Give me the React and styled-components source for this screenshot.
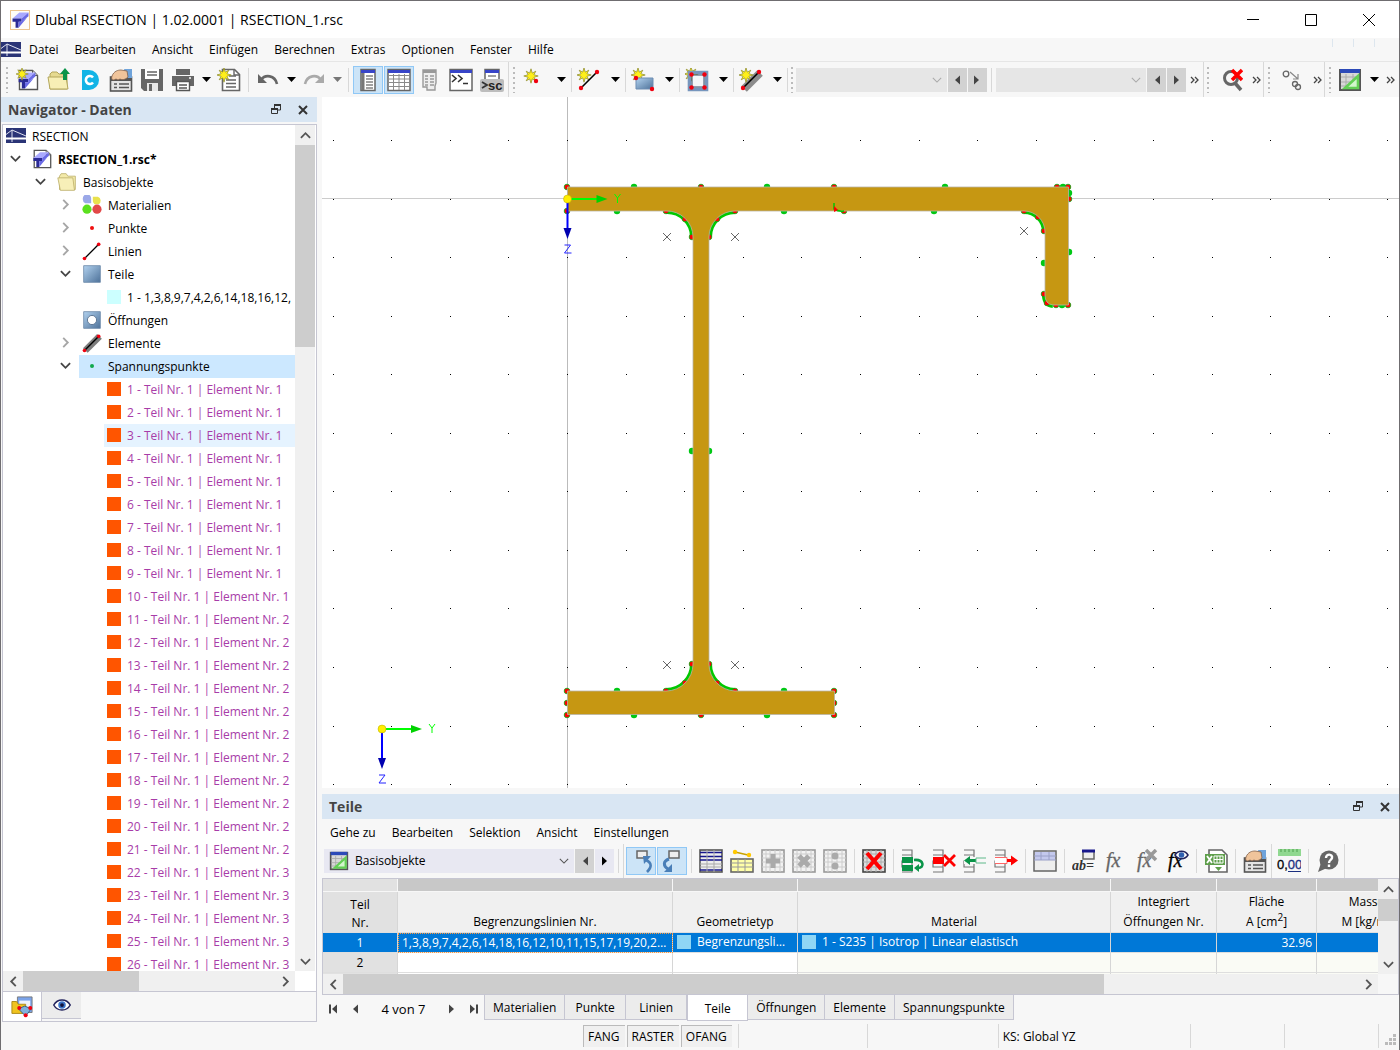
import React, { useState } from 'react'
import styled, { createGlobalStyle, css } from 'styled-components'

const GlobalStyle = createGlobalStyle`
  * {
    box-sizing: border-box;
  }
  body {
    margin: 0;
    background: #f7f7f7;
    color: #000;
    font-family: 'Open Sans', 'Noto Sans', sans-serif;
    font-size: 12px;
    line-height: 16px;
  }
  button, select {
    font: inherit;
    color: inherit;
    margin: 0;
    padding: 0;
    border: none;
    border-radius: 0;
    background: none;
  }
  svg {
    display: block;
    flex: none;
  }
`

/* ---------- icons ---------- */

const Icon = ({ size = 24, children }) => (
  <svg width={size} height={size} viewBox='0 0 24 24' fill='none' aria-hidden='true'>
    {children}
  </svg>
)

const STAR = 'M0-9 1.6-3.600 6-6 3.6-1.6 9 0 3.6 1.6 6 6 1.6 3.600 0 9-1.6 3.600-6 6-3.6 1.6-9 0-3.6-1.6-6-6-1.6-3.600z'

const Star = ({ x, y, s = 0.8 }) => (
  <path d={STAR} transform={`translate(${x} ${y}) scale(${s})`} fill='#ffef1a' stroke='#8c8a30' strokeWidth='.9' />
)

const Dot = ({ x, y, fill = '#f00010' }) => <circle cx={x} cy={y} r='2.2' fill={fill} />

const Beam = () => (
  <>
    <path d='M2 10 11 2h12L14 10z' fill='#a9a9ff' />
    <path d='M2 10h12v4h-4v8H6v-8H2z' fill='#2b2b96' />
    <path d='M14 10 23 2v5l-9 7zM10 14h4l7-5-11 13z' fill='#6a6ae6' />
  </>
)

const BeamPage = () => (
  <>
    <path d='M3.5 2.5h13l5 5v14h-18z' fill='#fff' stroke='#555' strokeWidth='1.4' />
    <path d='M16.5 2.5v5h5' stroke='#555' fill='#ddd' />
    <g transform='translate(1 3) scale(.8)'>
      <Beam />
    </g>
  </>
)

const LogoIcon = () => (
  <svg width='20' height='20' viewBox='0 0 20 20' aria-hidden='true'>
    <rect x='.5' y='.5' width='19' height='19' fill='#fffdf8' stroke='#ecc590' />
    <g transform='translate(1 1) scale(.76)'>
      <Beam />
    </g>
  </svg>
)

const BridgeIcon = () => (
  <svg width='20' height='16' viewBox='0 0 20 16' aria-hidden='true'>
    <path d='M0 0h20v15H0z' fill='#2a3476' />
    <path d='M0 6.500 6 2l14 6M6 2v12' fill='none' stroke='#dfe2f0' />
    <path d='M0 10.500h20' stroke='#fff' strokeWidth='2' />
  </svg>
)

const NewIcon = () => (
  <Icon>
    <BeamPage />
    <Star x={6} y={6} s={0.7} />
  </Icon>
)

const FolderShape = () => (
  <>
    <path d='M3 21V6l2-2h5l2 2h8v15z' fill='#e6da90' stroke='#b3a65b' />
    <path d='M1 9h18l2 12H3z' fill='#f7efb5' stroke='#b3a65b' />
  </>
)

const OpenIcon = () => (
  <Icon>
    <FolderShape />
    <path d='M18 0l5 6h-3v6h-4V6h-3z' fill='#0a9448' />
  </Icon>
)

const FolderIcon = () => (
  <Icon size={20}>
    <path d='M3 21V5l2-3h6l2 3h9v16z' fill='#f3eaa9' stroke='#bdb06b' />
    <path d='M1 7h18l2 15H4z' fill='#f7efb8' stroke='#bdb06b' />
  </Icon>
)

const CenterIcon = () => (
  <Icon>
    <path d='M4 2h7a10 10 0 0 1 0 20H4z' fill='#12b4e6' />
    <path d='M15 9.500a4 4 0 1 0 0 5' stroke='#fff' strokeWidth='2.600' />
  </Icon>
)

const HandIcon = () => (
  <Icon>
    <rect x='1.5' y='9' width='21' height='14' fill='#e4e4e4' stroke='#555' strokeWidth='1.6' />
    <path d='M1 9h22v4H1z' fill='#555' />
    <path d='M15 1h8v9h-6z' fill='#6fa3da' />
    <path d='M3 8c2-5 6-6 9-6l6 1 1 6c-3 3-6 3-8 2l-2 1-2-1-2 1c-2 0-3-1-2-4z' fill='#f0c49b' stroke='#80604a' strokeWidth='.8' />
    <path d='M5 16h3M5 19.500h3M10 16h10M10 19.500h10' stroke='#555' strokeWidth='1.4' />
  </Icon>
)

const SaveIcon = () => (
  <Icon>
    <path d='M1 1h22v22H4l-3-3z' fill='#666' />
    <path d='M5 1h14v10H5z' fill='#fff' />
    <path d='M7 4h10M7 7h10' stroke='#666' strokeWidth='1.6' />
    <path d='M7 15h11v8H7z' fill='#e8e8e8' />
    <path d='M9 16h3v7H9z' fill='#666' />
  </Icon>
)

const PrintIcon = () => (
  <Icon>
    <path d='M5 1h14v6H5z' fill='#666' />
    <path d='M1 8h22v10H1z' fill='#666' />
    <path d='M5.500 13.500h13v9h-13z' fill='#fff' stroke='#555' strokeWidth='1.4' />
    <path d='M8 17h8M8 20h8' stroke='#555' strokeWidth='1.3' />
    <path d='M18 10h2' stroke='#fff' strokeWidth='1.5' />
  </Icon>
)

const ReportIcon = () => (
  <Icon>
    <path d='M5.500 1.500h12l5 5v16h-17z' fill='#fff' stroke='#666' strokeWidth='1.6' />
    <path d='M17 2v5h5' stroke='#666' strokeWidth='1.4' />
    <path d='M12 8h7M9 12h10M9 15.500h10M9 19h10' stroke='#666' strokeWidth='1.5' />
    <Star x={7} y={7} />
  </Icon>
)

const UndoIcon = ({ flip, color = '#666' }) => (
  <Icon>
    <g transform={flip ? 'translate(24 0) scale(-1 1)' : undefined}>
      <path d='M2 6v9h9z' fill={color} />
      <path d='M5 12c4-6 14-5 16 4' stroke={color} strokeWidth='2.6' />
    </g>
  </Icon>
)

const WinShape = ({ x = 4, w = 16, bar = '#3845c8', children }) => (
  <>
    <rect x={x} y='1.500' width={w} height='21' fill='#fff' stroke='#666' strokeWidth='1.5' />
    <path d={`M${x} 3.500h${w}`} stroke={bar} strokeWidth='3' />
    {children}
  </>
)

const NavIcon = () => (
  <Icon>
    <WinShape x={5} w={14}>
      <path d='M7 5v17' stroke='#777' strokeWidth='3' />
      <path d='M10 8h7M10 11h7M10 14h7M10 17h7M10 20h7' stroke='#444' strokeWidth='1.2' />
    </WinShape>
  </Icon>
)

const TablesIcon = () => (
  <Icon>
    <WinShape x={1} w={22}>
      <path d='M1 7.500h22M1 11h22M1 14.500h22M1 18.500h22M6.500 6v16M12 6v16M17.500 6v16' stroke='#8a8a8a' />
    </WinShape>
  </Icon>
)

const PanelIcon = () => (
  <Icon>
    <path d='M5 2h13v13l-1 3v4H9v-3H5z' fill='#eee' stroke='#999' strokeWidth='1.4' />
    <path d='M5 3.500h13' stroke='#999' strokeWidth='3' />
    <path d='M7 8h3M12 8h4M7 11h3M12 11h4M7 14h3M12 14h4M7 17h3M12 17h4' stroke='#999' strokeWidth='1.3' />
  </Icon>
)

const ConsoleIcon = () => (
  <Icon>
    <WinShape x={1} w={22}>
      <path d='M3 7l4 3.500L3 14M9 7l4 3.500L9 14M14 15.500h5' stroke='#333' strokeWidth='1.6' />
    </WinShape>
  </Icon>
)

const ScriptIcon = () => (
  <Icon>
    <WinShape x={5} w={14}>
      <path d='M8 8h8' stroke='#444' />
    </WinShape>
    <rect x='0' y='11' width='24' height='13' rx='2' fill='#bdbdbd' />
    <path d='M2 14l5 3-5 3' stroke='#333' strokeWidth='1.8' />
    <text x='8' y='22' fontSize='13' fontWeight='700' fontFamily='Liberation Sans' fill='#222'>
      sc
    </text>
  </Icon>
)

const NewPointIcon = () => (
  <Icon>
    <Star x={8} y={8} />
    <Dot x={13} y={13} />
  </Icon>
)

const NewLineIcon = () => (
  <Icon>
    <Star x={7} y={7} />
    <path d='M4 20 20 4' stroke='#000' strokeWidth='1.6' />
    <Dot x={4} y={20} />
    <Dot x={20} y={4} />
  </Icon>
)

const gradientDefs = (
  <defs>
    <linearGradient id='steel' x1='0' y1='0' x2='1' y2='1'>
      <stop offset='0' stopColor='#b2d2ef' />
      <stop offset='1' stopColor='#4d7199' />
    </linearGradient>
  </defs>
)

const NewPartIcon = () => (
  <Icon>
    <Star x={7} y={7} />
    <path d='M5 10h17v11H5z' fill='url(#steel)' stroke='#6d8db3' />
    <Dot x={5} y={10} />
    <Dot x={21} y={21} />
  </Icon>
)

const NewOpeningIcon = () => (
  <Icon>
    <Star x={6} y={6} />
    <path d='M4.500 4.500h17v17h-17z' stroke='#7796bd' strokeWidth='3.600' />
    <path d='M7 7h12v12H7z' fill='#f4f6f9' stroke='#344b68' />
    <Dot x={6.5} y={6.5} />
    <Dot x={19.5} y={6.5} />
    <Dot x={6.5} y={19.5} />
    <Dot x={19.5} y={19.5} />
  </Icon>
)

const NewElementIcon = () => (
  <Icon>
    <path d='M5 21 21 5' stroke='#8c8c8c' strokeWidth='8' />
    <Star x={7} y={7} />
    <path d='M4 20 20 4' stroke='#000' strokeWidth='1.6' />
    <Dot x={4} y={20} />
    <Dot x={20} y={4} />
  </Icon>
)

const ZoomOffIcon = () => (
  <Icon>
    <g transform='translate(3 0)'>
      <circle cx='9' cy='10' r='6.500' stroke='#666' strokeWidth='3' />
      <path d='m13 15 6 7' stroke='#666' strokeWidth='3.500' />
      <path d='m10 2 10 10M20 2 10 12' stroke='#f00' strokeWidth='3.500' />
    </g>
  </Icon>
)

const GuideIcon = () => (
  <Icon>
    <circle cx='6' cy='6' r='2.800' stroke='#666' strokeWidth='1.3' />
    <circle cx='15' cy='16' r='2.500' stroke='#666' strokeWidth='1.3' />
    <circle cx='18' cy='19' r='2.500' stroke='#666' strokeWidth='1.3' />
    <path d='m10 4 8 7m0-5v5h-5' stroke='#888' strokeWidth='1.2' />
  </Icon>
)

const SheetIcon = ({ size }) => (
  <Icon size={size}>
    <rect x='2' y='2' width='20' height='20' fill='#d8d8d8' stroke='#555' strokeWidth='2' />
    <path d='M2 3h20' stroke='#2c49b8' strokeWidth='4' />
    <path d='M3 9h18M3 14h18M3 18h18M8 6v15M15 6v15' stroke='#aaa' />
    <path d='M20 8v12H7z' fill='#d3f5cd' stroke='#63cf55' strokeWidth='2.600' />
  </Icon>
)

const MaterialIcon = () => (
  <Icon size={20}>
    <path d='M1 4a5 5 0 0 1 10 0v6H4a6 6 0 0 1-3-6z' fill='#9ba8e8' />
    <path d='M13 2h6a5 5 0 0 1 1 9h-5a5 5 0 0 1-2-5z' fill='#e9e14c' />
    <circle cx='6' cy='17' r='5.500' fill='#5be01e' />
    <circle cx='18' cy='17' r='5.500' fill='#e24848' />
  </Icon>
)

const PointIcon = ({ color }) => (
  <Icon>
    <circle cx='12' cy='12' r='2' fill={color} />
  </Icon>
)

const LineIcon = ({ thick }) => (
  <Icon size={20}>
    {thick && <path d='M4 21 21 4' stroke='#7c7c7c' strokeWidth='8' />}
    <path d='M3 21 21 3' stroke='#000' strokeWidth='1.600' />
    <Dot x={3} y={21} />
    <Dot x={20} y={4} />
  </Icon>
)

const PartIcon = ({ hole }) => (
  <Icon size={20}>
    <path d='M2 2h20v20H2z' fill='url(#steel)' stroke='#6f8cab' />
    {hole && <circle cx='12' cy='12' r='5.500' fill='#fff' stroke='#4f6a89' />}
  </Icon>
)

const DataTabIcon = () => (
  <Icon size={22}>
    <path d='M7 1h16v17H7z' fill='#7aa3ea' stroke='#777' />
    <path d='M9 5h12v11H9z' fill='#eef2fb' />
    <path d='M1 19V6h5l2 3h8v10z' fill='#f0c31e' stroke='#a98614' />
    <path d='m8 14 7-3 7 3-6 8z' fill='#7fb1dd' stroke='#33597f' />
    <Dot x={9} y={13} />
    <Dot x={21} y={13} />
    <Dot x={16} y={21} />
  </Icon>
)

const EyeIcon = () => (
  <Icon size={18}>
    <path d='M1 12c5-9 17-9 22 0-5 9-17 9-22 0z' fill='#fff' stroke='#22225c' strokeWidth='2' />
    <circle cx='12' cy='12' r='5' fill='#3c74c9' />
    <circle cx='12' cy='12' r='2.500' fill='#12123c' />
  </Icon>
)

const JumpIcon = ({ down }) => (
  <Icon>
    <rect x={down ? 9 : 8} y='2' width='10' height='7' fill='#eee' stroke='#666' strokeWidth='1.500' />
    {down ? (
      <path d='M9 10C3 12 3 17 8 20' stroke='#4a7fb8' strokeWidth='3' />
    ) : (
      <path d='M17 11c6 3 6 7 1 12' stroke='#4a7fb8' strokeWidth='2.600' />
    )}
    {down ? <path d='M12 15v8H4z' fill='#4a7fb8' /> : <path d='M14 7h8l-7 8z' fill='#4a7fb8' />}
  </Icon>
)

const GridShape = ({ y = 1, line = '#aaa', border = '#666', fill = '#fff' }) => (
  <>
    <rect x='1' y={y} width='22' height={23 - y} fill={fill} stroke={border} strokeWidth='1.600' />
    <path
      d={`M1 ${y + 4}h22M1 ${y + 8}h22M1 ${y + 12}h22M1 ${y + 17}h22M5 ${y}V23M9 ${y}V23M14 ${y}V23M19 ${y}V23`}
      stroke={line}
    />
  </>
)

const FilterTableIcon = () => (
  <Icon>
    <rect x='1' y='1' width='22' height='22' fill='#eee' stroke='#555' strokeWidth='1.600' />
    <path d='M1 3.500h22M1 7.500h22M1 11h22M1 21h22' stroke='#17178c' strokeWidth='1.600' />
    <path d='M1 15h22M1 18h22M8 1v22M15 1v22' stroke='#aaa' />
  </Icon>
)

const SelectLineIcon = () => (
  <Icon>
    <path d='M5 3 18 6' stroke='#c9a200' strokeWidth='1.500' />
    <Dot x={5} y={3} fill='#ffc800' />
    <Dot x={19} y={6} fill='#ffc800' />
    <rect x='1' y='10' width='22' height='13' fill='#ffffa8' stroke='#666' strokeWidth='1.600' />
    <path d='M1 14h22M1 18h22M8 10v13M15 10v13' stroke='#999' />
  </Icon>
)

const GreyTableIcon = ({ sign }) => (
  <Icon>
    <GridShape line='#ccc' border='#999' fill='#f2f2f2' />
    {sign === 'plus' && <path d='M12 5v14M5 12h14' stroke='#aaa' strokeWidth='5' />}
    {sign === 'times' && <path d='m7 7 10 10M17 7 7 17' stroke='#aaa' strokeWidth='5' />}
    {sign === 'divide' && (
      <>
        <circle cx='12' cy='7' r='3.500' fill='#aaa' />
        <circle cx='12' cy='17' r='3.500' fill='#aaa' />
      </>
    )}
  </Icon>
)

const DeleteTableIcon = () => (
  <Icon>
    <GridShape fill='#ddd' border='#444' />
    <path d='m5 4 14 16M19 4 5 20' stroke='#f00' strokeWidth='4' />
  </Icon>
)

const RowsIcon = ({ kind }) => (
  <Icon>
    <path d='M1 1h10v5H1M1 18h10v5H1M1 6h10v6H1v6h10v-6' stroke='#777' strokeWidth='1.200' />
    {kind === 'insert' && (
      <>
        <path d='M1 8h11v6H1zM1 16h11v6H1z' fill='#0a9448' />
        <path d='M13 11c10-1 11 8 4 8' stroke='#0a9448' strokeWidth='2.600' />
        <path d='M18 15v8l-5-4z' fill='#0a9448' />
      </>
    )}
    {kind === 'delete' && (
      <>
        <path d='M1 8h11v7H1z' fill='#f00' />
        <path d='m12 6 11 11M23 6 12 17' stroke='#f00' strokeWidth='2.800' />
      </>
    )}
    {kind === 'in' && (
      <>
        <path d='M1 8h11v7H1z' fill='#f7f7f7' />
        <path d='M1 11.500 7 7v3h6v3H7v3z' fill='#0a9448' />
        <path d='M23 9H13v5h10' stroke='#5fb98a' />
      </>
    )}
    {kind === 'out' && (
      <>
        <path d='M1 8.500h12v6H1' fill='#fff' stroke='#f66' />
        <path d='M13 10h4V6.500l7 5-7 5V13h-4z' fill='#f00' />
      </>
    )}
  </Icon>
)

const HeaderTableIcon = () => (
  <Icon>
    <rect x='1' y='2' width='22' height='20' fill='#eee' stroke='#666' strokeWidth='1.500' />
    <path d='M2 3h20v8H2z' fill='#c4c9ee' />
    <path d='M1 7h22M1 11h22M8 3v8M16 3v8' stroke='#9aa0c8' />
  </Icon>
)

const FormulaIcon = ({ assign, children, color = '#666', extra }) => (
  <Icon>
    <text
      x={assign ? 0 : 3}
      y={assign ? 21 : 18}
      fontFamily='Liberation Serif'
      fontStyle='italic'
      fontWeight={assign ? 700 : 400}
      fontSize={assign ? 14 : 20}
      fill={color}
      stroke={assign ? 'none' : color}
      strokeWidth='.3'
    >
      {children}
    </text>
    {extra}
  </Icon>
)

const MiniWindow = (
  <>
    <rect x='11' y='2' width='11' height='8' fill='#eee' stroke='#666' strokeWidth='1.500' />
    <path d='M10 2h13' stroke='#17178c' strokeWidth='3' />
  </>
)

const MiniEye = (
  <>
    <path d='M10 6c3-5 10-5 13 0-3 5-10 5-13 0z' fill='#fff' stroke='#22225c' strokeWidth='1.500' />
    <circle cx='16.500' cy='6' r='2.800' fill='#2f5fb0' />
  </>
)

const ExcelIcon = () => (
  <Icon>
    <path d='M5 1h13l5 5v17H5z' fill='#fff' stroke='#666' strokeWidth='1.600' />
    <path d='M1 5h20v11H1z' fill='#5f9f4c' />
    <path d='m3 7 5 7M8 7l-5 7' stroke='#fff' strokeWidth='1.800' />
    <path d='M10 7h9v7h-9zM10 10.500h9M13 7v7M16 7v7' stroke='#fff' />
    <path d='M11 18h7l-3.500 4z' fill='#5f9f4c' />
  </Icon>
)

const DecimalsIcon = () => (
  <Icon>
    <path d='M1 0h23v7H1z' fill='#90d890' />
    <path d='M4 0v3M8 0v3M12 0v3M16 0v3M20 0v3' stroke='#4f9f4f' />
    <text x='0' y='20' fontSize='13' fontFamily='Liberation Sans' fill='#000' stroke='#000' strokeWidth='.3'>
      0,
      <tspan fill='#1a2f80' stroke='#1a2f80'>00</tspan>
    </text>
    <path d='M11 22.500h13' stroke='#1a2f80' />
  </Icon>
)

const HelpIcon = () => (
  <Icon>
    <circle cx='13' cy='11' r='9.500' fill='#666' />
    <path d='M5 14 2 23l9-4z' fill='#666' />
    <path d='M10 9c0-5 7-4 6 0-.5 2-3 2-3 5M13 15.500v2.500' stroke='#fff' strokeWidth='2.400' />
  </Icon>
)

const Chevron = ({ dir, color = '#555', size = 11, weight = 2 }) => {
  const d = {
    down: 'M1 3.500 6 8.500 11 3.500',
    up: 'M1 8.500 6 3.500 11 8.500',
    left: 'M8.500 1 3.500 6 8.500 11',
    right: 'M3.500 1 8.500 6 3.500 11',
  }[dir]
  return (
    <svg width={size} height={size} viewBox='0 0 12 12' aria-hidden='true'>
      <path d={d} fill='none' stroke={color} strokeWidth={weight} />
    </svg>
  )
}

const Triangle = ({ dir, color = '#444', bar }) => (
  <svg width='12' height='10' viewBox='0 0 12 10' aria-hidden='true'>
    <g transform={dir === 'left' ? undefined : 'translate(12 0) scale(-1 1)'}>
      <path d='M9 .5v9L4 5z' fill={color} />
      {bar && <path d='M2 .5v9' stroke={color} strokeWidth='2' />}
    </g>
  </svg>
)

const CaretShape = ({ color = '#000' }) => (
  <svg width='9' height='5' viewBox='0 0 9 5' aria-hidden='true'>
    <path d='M0 0h9L4.500 5z' fill={color} />
  </svg>
)

const MoreShape = () => (
  <svg width='9' height='8' viewBox='0 0 9 8' aria-hidden='true'>
    <path d='m1 1 3 3-3 3M5 1l3 3-3 3' fill='none' stroke='#444' strokeWidth='1.300' />
  </svg>
)

const RestoreShape = () => (
  <svg width='11' height='11' viewBox='0 0 11 11' aria-hidden='true'>
    <path d='M3.500 4V1h6v5H7' fill='none' stroke='#333' />
    <path d='M3 1h7M0 5h7' stroke='#333' strokeWidth='2' />
    <path d='M.5 4.500h6v5h-6z' fill='none' stroke='#333' />
  </svg>
)

const CloseShape = () => (
  <svg width='10' height='10' viewBox='0 0 10 10' aria-hidden='true'>
    <path d='m1 1 8 8M9 1 1 9' stroke='#333' strokeWidth='2' />
  </svg>
)

/* ---------- shared parts ---------- */

const ToolButton = styled.button`
  display: flex;
  align-items: center;
  justify-content: center;
  flex: none;
  width: ${p => p.$width || 30}px;
  height: 28px;
  ${p =>
    p.$active &&
    css`
      background: #cce4f7;
      box-shadow: inset 0 0 0 1px #90c8f6;
    `}
`

const ArrowButton = styled.button`
  display: flex;
  align-items: center;
  justify-content: center;
  flex: none;
  width: 19px;
  height: 24px;
  background: ${p => p.$bg || '#d2d2d2'};
`

const Sep = styled.span`
  flex: none;
  width: 1px;
  height: ${p => (p.$tall ? '100%' : '24px')};
  margin: 0 ${p => p.$space || 0}px;
  background: #d8d8d8;
`

const Grip = styled.span`
  flex: none;
  width: ${p => p.$width || 6}px;
  height: 26px;
  background: repeating-linear-gradient(#bbb 0 2px, transparent 2px 5px) center / 2px 100% no-repeat;
`

const MenuRow = styled.nav`
  display: flex;
  align-items: center;
  height: 24px;
  gap: 16px;
`

const MenuItem = styled.button`
  white-space: nowrap;
`

const PaneTitle = styled.header`
  display: flex;
  align-items: center;
  gap: 16px;
  height: 25px;
  padding: 0 9px 0 7px;
  background: #d9e6f3;
  color: #444;

  h2 {
    flex: 1;
    margin: 0;
    padding-top: 1px;
    font-size: 14px;
    font-weight: 700;
  }
`

const ScrollButton = styled.button`
  display: flex;
  align-items: center;
  justify-content: center;
  flex: none;
  width: 20px;
  height: 20px;
`

const ScrollTrack = styled.div`
  display: flex;
  flex-direction: ${p => (p.$vertical ? 'column' : 'row')};
  flex: none;
  ${p => (p.$vertical ? 'width: 20px' : 'height: 20px')};
  background: #f0f0f0;
`

const ScrollRail = styled.div`
  display: flex;
  flex-direction: inherit;
  flex: 1;
`

const Thumb = styled.div`
  flex: 0 0 ${p => p.$size}%;
  background: #cdcdcd;
`

const ScrollBar = ({ vertical, size }) => (
  <ScrollTrack $vertical={vertical}>
    <ScrollButton aria-label={vertical ? 'Nach oben' : 'Nach links'}>
      <Chevron dir={vertical ? 'up' : 'left'} />
    </ScrollButton>
    <ScrollRail>
      <Thumb $size={size} />
    </ScrollRail>
    <ScrollButton aria-label={vertical ? 'Nach unten' : 'Nach rechts'}>
      <Chevron dir={vertical ? 'down' : 'right'} />
    </ScrollButton>
  </ScrollTrack>
)

const SelectBox = styled.label`
  display: flex;
  align-items: center;
  flex: ${p => (p.$fixed ? '0 0 250px' : '1 1 120px')};
  min-width: 0;
  height: 24px;
  padding: 0 5px;
  gap: 6px;
  background: ${p => (p.$fixed ? '#e8e8f2' : '#e6e6e6')};

  select {
    flex: 1;
    min-width: 0;
    height: 24px;
    appearance: none;
    outline: none;
  }
`

/* ---------- window frame ---------- */

const Window = styled.div`
  display: flex;
  flex-direction: column;
  min-height: 100vh;
  border: 1px solid #6f6d70;
  background: #f7f7f7;
`

const TitleBar = styled.header`
  display: flex;
  align-items: center;
  height: 37px;
  padding: 0 4px 0 9px;
  gap: 5px;
  background: #fff;

  h1 {
    flex: 1;
    margin: 0;
    font-size: 14px;
    line-height: 20px;
    font-weight: 400;
  }
`

const WindowButton = styled.button`
  display: flex;
  align-items: center;
  justify-content: center;
  width: 53px;
  height: 36px;
`

const TopMenu = styled(MenuRow)`
  padding: 1px 24px 0 0;
  border-bottom: 1px solid #e6e6e6;

  svg {
    margin-right: -8px;
  }
`

const MenuMarks = styled.span`
  display: flex;
  align-self: flex-start;
  gap: 20px;
  margin-left: auto;
`

const MenuMark = styled.span`
  width: 1px;
  height: 8px;
  background: #dde6ee;
`

const ToolStrip = styled.div`
  display: flex;
  align-items: center;
  gap: 1px;
  height: 35px;
`

const Main = styled.main`
  display: flex;
  flex: 1;
  gap: 5px;
`

/* ---------- navigator ---------- */

const NavPane = styled.aside`
  display: flex;
  flex-direction: column;
  flex: none;
  width: 316px;
`

const NavFrame = styled.div`
  display: flex;
  flex-direction: column;
  flex: 1;
  margin: 2px 0 0 1px;
  border: 1px solid #c6c6d2;
`

const NavBody = styled.div`
  display: flex;
  flex: 1;
  min-height: 0;
  padding-right: 1px;
  background: #fff;
`

const TreeView = styled.ul`
  flex: 1 1 0;
  height: 846px;
  margin: 0;
  padding: 0;
  overflow: hidden;
  list-style: none;
`

const TreeRow = styled.li`
  display: flex;
  height: 23px;
  padding-left: ${p => p.$indent}px;
`

const Toggle = styled.button`
  display: flex;
  align-items: center;
  justify-content: center;
  flex: none;
  width: 26px;
  padding: 0 2px 2px 0;
`

const TreeLabel = styled.span`
  display: flex;
  align-items: center;
  flex: 1;
  min-width: 0;
  gap: ${p => (p.$leaf ? 6 : 4)}px;
  padding-left: ${p => (p.$leaf ? 3 : 1)}px;
  overflow: hidden;
  white-space: nowrap;
  color: ${p => p.$color || '#000'};
  font-weight: ${p => (p.$bold ? 700 : 400)};
  background: ${p => (p.$state === 'selected' ? '#cce8ff' : p.$state === 'hover' ? '#e5f3ff' : 'none')};
`

const TreeIcon = styled.span`
  display: flex;
  align-items: center;
  justify-content: center;
  flex: none;
  width: 24px;
  padding-bottom: 2px;
`

const Swatch = styled.span`
  flex: none;
  width: 14px;
  height: 14px;
  margin-bottom: 2px;
  background: ${p => p.$color};
`

const NavScrollRow = styled.div`
  padding-right: 21px;
  background: #fff;
`

const NavTabs = styled.div`
  display: flex;
  align-items: flex-start;
  height: 30px;
  border-top: 1px solid #c6c6d2;
`

const NavTab = styled.button`
  display: flex;
  align-items: center;
  justify-content: center;
  width: 39px;
  height: ${p => (p.$active ? 29 : 27)}px;
  background: ${p => (p.$active ? '#fff' : '#ececec')};
  border-right: ${p => (p.$active ? 1 : 0)}px solid #c6c6d2;
  border-bottom: ${p => (p.$active ? 0 : 1)}px solid #c6c6d2;
`

const groups = [
  { label: 'Materialien', icon: <MaterialIcon />, open: false },
  { label: 'Punkte', icon: <PointIcon color='#f01010' />, open: false },
  { label: 'Linien', icon: <LineIcon />, open: false },
  { label: 'Teile', icon: <PartIcon />, open: true, child: '1 - 1,3,8,9,7,4,2,6,14,18,16,12,' },
  { label: 'Öffnungen', icon: <PartIcon hole /> },
  { label: 'Elemente', icon: <LineIcon thick />, open: false },
  { label: 'Spannungspunkte', icon: <PointIcon color='#12a84c' />, open: true, selected: true },
]

const elementOf = n => (n <= 10 ? 1 : n <= 21 ? 2 : 3)

const stressPoints = Array.from({ length: 26 }, (_, i) => `${i + 1} - Teil Nr. 1 | Element Nr. ${elementOf(i + 1)}`)

const ToggleFor = ({ open }) => (
  <Toggle aria-label={open ? 'Zuklappen' : 'Aufklappen'}>
    <Chevron dir={open ? 'down' : 'right'} color={open ? '#444' : '#a6a6a6'} />
  </Toggle>
)

const Navigator = () => (
  <NavPane>
    <PaneTitle>
      <h2>Navigator - Daten</h2>
      <button aria-label='Abdocken'>
        <RestoreShape />
      </button>
      <button aria-label='Schließen'>
        <CloseShape />
      </button>
    </PaneTitle>
    <NavFrame>
      <NavBody>
        <TreeView>
          <TreeRow $indent={0}>
            <TreeLabel>
              <TreeIcon>
                <BridgeIcon />
              </TreeIcon>
              RSECTION
            </TreeLabel>
          </TreeRow>
          <TreeRow $indent={0}>
            <ToggleFor open />
            <TreeLabel $bold>
              <TreeIcon>
                <Icon size={22}>
                  <BeamPage />
                </Icon>
              </TreeIcon>
              RSECTION_1.rsc*
            </TreeLabel>
          </TreeRow>
          <TreeRow $indent={25}>
            <ToggleFor open />
            <TreeLabel>
              <TreeIcon>
                <FolderIcon />
              </TreeIcon>
              Basisobjekte
            </TreeLabel>
          </TreeRow>
          {groups.map(g => (
            <React.Fragment key={g.label}>
              <TreeRow $indent={g.open === undefined ? 76 : 50}>
                {g.open !== undefined && <ToggleFor open={g.open} />}
                <TreeLabel $state={g.selected && 'selected'}>
                  <TreeIcon>{g.icon}</TreeIcon>
                  {g.label}
                </TreeLabel>
              </TreeRow>
              {g.child && (
                <TreeRow $indent={101}>
                  <TreeLabel $leaf>
                    <Swatch $color='#ccffff' />
                    {g.child}
                  </TreeLabel>
                </TreeRow>
              )}
            </React.Fragment>
          ))}
          {stressPoints.map((text, i) => (
            <TreeRow key={text} $indent={101}>
              <TreeLabel $leaf $color='#a83ca8' $state={i === 2 && 'hover'}>
                <Swatch $color='#ff5500' />
                {text}
              </TreeLabel>
            </TreeRow>
          ))}
        </TreeView>
        <ScrollBar vertical size={25} />
      </NavBody>
      <NavScrollRow>
        <ScrollBar size={46} />
      </NavScrollRow>
      <NavTabs>
        <NavTab $active aria-label='Daten'>
          <DataTabIcon />
        </NavTab>
        <NavTab aria-label='Ansichten'>
          <EyeIcon />
        </NavTab>
      </NavTabs>
    </NavFrame>
  </NavPane>
)

/* ---------- drawing ---------- */

const Work = styled.section`
  display: flex;
  flex-direction: column;
  flex: 1;
  min-width: 0;
  gap: 6px;
`

const Canvas = styled.div`
  flex: 1 1 0;
  min-height: 400px;
  background: #fff;
  overflow: hidden;

  svg {
    width: 100%;
    height: 100%;
  }
`

const OUTLINE =
  'M567.5 187H1068.500V305H1053Q1045 304 1045 295V232A21 21 0 0 0 1024 211H735A26 26 0 0 0 709 237V664A27 27 0 0 0 735 691H834.500V714.500H567.500V691H666A27 27 0 0 0 693 664V237A26 26 0 0 0 666 211H567.500Z'

const FILLETS = [
  'M666 211A26 26 0 0 1 693 237',
  'M735 211A26 26 0 0 0 709 237',
  'M1024 211A21 21 0 0 1 1045 232',
  'M693 664A27 27 0 0 1 666 691',
  'M709 664A27 27 0 0 0 735 691',
  'M1045 295Q1045 304 1053 305',
]

const redPoints = [
  [567, 187], [701, 187], [834, 187], [1057, 187], [1068, 187], [1069, 199],
  [567, 211], [666, 211], [685, 219], [692, 237], [709, 237], [717, 219], [735, 211], [844, 211],
  [1024, 211], [1038, 217], [1044, 231], [1044, 294], [1047, 303], [1056, 305], [1068, 305],
  [692, 664], [709, 664], [685, 683], [717, 683], [666, 691], [735, 691],
  [567, 691], [567, 703], [567, 715], [834, 691], [834, 703], [834, 715], [701, 715],
]

const greenPoints = [
  [634, 187], [767, 187], [945, 187], [1063, 187], [1069, 193], [617, 211], [784, 211], [934, 211],
  [692, 451], [709, 451], [1044, 263], [1069, 252], [1062, 305],
  [617, 691], [784, 691], [634, 715], [767, 715],
]

const crosses = [[667, 237], [735, 237], [1024, 231], [667, 665], [735, 665]]

const range = n => Array.from({ length: n }, (_, i) => i)

const Axes = ({ x, y }) => (
  <g transform={`translate(${x} ${y})`}>
    <path d='M0 0H30' stroke='#0f0' strokeWidth='2' />
    <path d='M29-4 40 0 29 4z' fill='#00d200' />
    <path d='M0 0V31' stroke='#00f' strokeWidth='2' />
    <path d='M-4 29h8L0 40z' fill='#0000b0' />
    <circle r='4' fill='#ffee00' stroke='#b8a800' strokeWidth='.5' />
    <path d='m47-5 3 4 3-4M50-1v5' fill='none' stroke='#0f0' />
    <path d='M-3 46h6l-6 8h7' fill='none' stroke='#22f' />
  </g>
)

const Drawing = () => (
  <Canvas>
    <svg role='img' aria-label='Querschnitt'>
      {gradientDefs}
      <g transform='translate(-322 -97)'>
        <path d='M322 198.500H3000' stroke='#ccc' />
        <path d='M567.500 97V3000' stroke='#bbb' />
        {range(30).map(i =>
          range(20).map(j => (
            <rect
              key={`${i}-${j}`}
              x={Math.round(332.6 + i * 58.6)}
              y={Math.round(140 + j * 58.55)}
              width='1'
              height='1'
              fill='#000'
            />
          ))
        )}
        {FILLETS.map(d => (
          <path key={d} d={d} fill='none' stroke='#00c800' strokeWidth='6' />
        ))}
        {greenPoints.map(([x, y]) => (
          <circle key={`${x},${y}`} cx={x} cy={y} r='3.200' fill='#00c814' />
        ))}
        {redPoints.map(([x, y]) => (
          <circle key={`${x},${y}`} cx={x} cy={y} r='2.800' fill='#f00' stroke='#00b414' strokeWidth='.8' />
        ))}
        <path d={OUTLINE} fill='#c69712' stroke='#b9b4a6' strokeWidth='.8' />
        <path d='M834 203v6q5 3 10 2' fill='none' stroke='#00c800' strokeWidth='1.500' />
        <path d='M834 206l4 4-4 2z' fill='#f00' />
        {crosses.map(([x, y]) => (
          <path key={`${x},${y}`} d={`M${x - 4} ${y - 4}l8 8m0-8l-8 8`} stroke='#666' />
        ))}
        <Axes x={567.5} y={199} />
        <Axes x={382} y={729} />
      </g>
    </svg>
  </Canvas>
)

/* ---------- table pane ---------- */

const TablePane = styled.section`
  display: flex;
  flex-direction: column;
  min-width: 0;
`

const TableMenu = styled(MenuRow)`
  padding: 2px 0 0 8px;
  height: 25px;
`

const TableTools = styled(ToolStrip)`
  height: 34px;
  padding-left: 2px;
`

const GridFrame = styled.div`
  border: 1px solid #c6c6d2;
`

const GridBody = styled.div`
  display: flex;
  height: 95px;
`

const GridClip = styled.div`
  flex: 1 1 0;
  min-width: 0;
  overflow: hidden;
`

const Grid = styled.table`
  width: 100%;
  min-width: 1094px;
  table-layout: fixed;
  border-collapse: separate;
  border-spacing: 0;

  th, td {
    padding: 0 4px;
    font-weight: 400;
    border-right: 1px solid #d6d6d6;
    border-bottom: 1px solid #dedede;
    overflow: hidden;
    text-overflow: ellipsis;
    white-space: nowrap;
  }
`

const BandRow = styled.tr`
  td {
    height: 13px;
    background: #c8c8c8;
    border-color: #f7f7f7;
  }
  td:first-child {
    background: #e1e1e1;
  }
`

const HeadRow = styled.tr`
  th {
    height: 40px;
    vertical-align: bottom;
    line-height: 20px;
    background: #f0f0f0;
  }
  th:first-child {
    background: #e1e1e1;
    line-height: 18px;
  }
  sup {
    font-size: 10px;
    line-height: 0;
  }
`

const DataRow = styled.tr`
  th, td {
    height: 20px;
    line-height: 16px;
    background: ${p => (p.$selected ? '#0078d7' : '#fafbf5')};
    color: ${p => (p.$selected ? '#fff' : '#000')};
  }
  th {
    background: ${p => (p.$selected ? '#0078d7' : '#e1e1e1')};
  }
  td:nth-child(2), td:nth-child(3) {
    background: ${p => (p.$selected ? '#0078d7' : '#fff')};
  }
`

const FocusCell = styled.td`
  outline: 1px dotted #ff9a3c;
  outline-offset: -1px;
`

const TypeCell = styled.td`
  && {
    padding-right: 8px;
  }
`

const NumberCell = styled.td`
  text-align: right;
`

const CellSwatch = styled(Swatch)`
  display: inline-block;
  margin: 0 6px 2px 0;
  vertical-align: middle;
`

const GridFoot = styled.div`
  padding-right: 20px;
`

const TabBar = styled.div`
  display: flex;
  align-items: flex-start;
  height: 27px;
  padding-left: 6px;
`

const Pager = styled.div`
  display: flex;
  align-items: center;
  height: 27px;
  width: 151px;
  margin-right: 5px;
  gap: 9px;

  span {
    flex: 1;
    text-align: center;
    font-size: 13px;
  }
`

const SheetTab = styled.button`
  height: ${p => (p.$active ? 26 : 25)}px;
  padding: ${p => (p.$active ? '2px 16px 0' : '1px 8px 0')};
  min-width: 61px;
  background: ${p => (p.$active ? '#fff' : '#ececec')};
  border: 1px solid #c6c6d2;
  border-left-width: ${p => (p.$active ? 1 : 0)}px;
  border-top: none;

  &:first-of-type {
    border-left-width: 1px;
  }
`

const tabNames = ['Materialien', 'Punkte', 'Linien', 'Teile', 'Öffnungen', 'Elemente', 'Spannungspunkte']

const PartsTable = () => {
  const [tab, setTab] = useState('Teile')

  return (
    <TablePane>
      <PaneTitle>
        <h2>Teile</h2>
        <button aria-label='Abdocken'>
          <RestoreShape />
        </button>
        <button aria-label='Schließen'>
          <CloseShape />
        </button>
      </PaneTitle>
      <TableMenu>
        {['Gehe zu', 'Bearbeiten', 'Selektion', 'Ansicht', 'Einstellungen'].map(m => (
          <MenuItem key={m}>{m}</MenuItem>
        ))}
      </TableMenu>
      <TableTools>
        <SelectBox $fixed>
          <SheetIcon size={20} />
          <select aria-label='Kategorie'>
            <option>Basisobjekte</option>
          </select>
          <Chevron dir='down' size={10} weight={1.3} />
        </SelectBox>
        <ArrowButton aria-label='Zurück'>
          <Triangle dir='left' />
        </ArrowButton>
        <ArrowButton $bg='#e8e8f2' aria-label='Weiter'>
          <Triangle dir='right' color='#000' />
        </ArrowButton>
        <Sep $space={3} />
        <Sep $tall />
        <span />
        <ToolButton $active aria-label='Auswahl in Grafik'><JumpIcon /></ToolButton>
        <ToolButton $active aria-label='Auswahl in Tabelle'><JumpIcon down /></ToolButton>
        <Sep $space={3} />
        <ToolButton aria-label='Filter'><FilterTableIcon /></ToolButton>
        <ToolButton aria-label='Selektierte'><SelectLineIcon /></ToolButton>
        <ToolButton aria-label='Hinzufügen'><GreyTableIcon sign='plus' /></ToolButton>
        <ToolButton aria-label='Multiplizieren'><GreyTableIcon sign='times' /></ToolButton>
        <ToolButton aria-label='Dividieren'><GreyTableIcon sign='divide' /></ToolButton>
        <Sep $space={3} />
        <ToolButton aria-label='Tabelle leeren'><DeleteTableIcon /></ToolButton>
        <Sep $space={3} />
        <ToolButton aria-label='Zeile kopieren'><RowsIcon kind='insert' /></ToolButton>
        <ToolButton aria-label='Zeile leeren'><RowsIcon kind='delete' /></ToolButton>
        <ToolButton aria-label='Zeile einfügen'><RowsIcon kind='in' /></ToolButton>
        <ToolButton aria-label='Zeile löschen'><RowsIcon kind='out' /></ToolButton>
        <Sep $space={3} />
        <ToolButton aria-label='Kopfzeile'><HeaderTableIcon /></ToolButton>
        <Sep $space={3} />
        <ToolButton aria-label='Parameter'><FormulaIcon assign color='#333' extra={MiniWindow}>ab=</FormulaIcon></ToolButton>
        <ToolButton aria-label='Formel'><FormulaIcon>fx</FormulaIcon></ToolButton>
        <ToolButton aria-label='Formel löschen'>
          <FormulaIcon extra={<path d='m12 1 10 10M22 1 12 11' stroke='#999' strokeWidth='3.500' />}>fx</FormulaIcon>
        </ToolButton>
        <ToolButton aria-label='Formel zeigen'><FormulaIcon color='#000' extra={MiniEye}>fx</FormulaIcon></ToolButton>
        <Sep $space={3} />
        <ToolButton aria-label='Excel'><ExcelIcon /></ToolButton>
        <Sep $space={3} />
        <ToolButton aria-label='Optionen'><HandIcon /></ToolButton>
        <Sep $tall />
        <span />
        <ToolButton aria-label='Dezimalstellen'><DecimalsIcon /></ToolButton>
        <Sep $space={3} />
        <ToolButton aria-label='Hilfe'><HelpIcon /></ToolButton>
        <Sep $tall />
      </TableTools>
      <GridFrame>
        <GridBody>
          <GridClip>
            <Grid>
              <colgroup>
                <col width='75' />
                <col width='275' />
                <col width='125' />
                <col />
                <col width='106' />
                <col width='100' />
                <col width='100' />
              </colgroup>
              <thead>
                <BandRow>
                  {range(7).map(i => (
                    <td key={i} />
                  ))}
                </BandRow>
                <HeadRow>
                  <th>Teil<br />Nr.</th>
                  <th>Begrenzungslinien Nr.</th>
                  <th>Geometrietyp</th>
                  <th>Material</th>
                  <th>Integriert<br />Öffnungen Nr.</th>
                  <th>Fläche<br />A [cm<sup>2</sup>]</th>
                  <th>Masse<br />M [kg/m]</th>
                </HeadRow>
              </thead>
              <tbody>
                <DataRow $selected>
                  <th>1</th>
                  <FocusCell>1,3,8,9,7,4,2,6,14,18,16,12,10,11,15,17,19,20,21,22,23</FocusCell>
                  <TypeCell><CellSwatch $color='#8fd6f5' />Begrenzungslinien</TypeCell>
                  <td><CellSwatch $color='#8fd6f5' />1 - S235 | Isotrop | Linear elastisch</td>
                  <td />
                  <NumberCell>32.96</NumberCell>
                  <td />
                </DataRow>
                <DataRow>
                  <th>2</th>
                  {range(6).map(i => (
                    <td key={i} />
                  ))}
                </DataRow>
                <DataRow>
                  <th />
                  {range(6).map(i => (
                    <td key={i} />
                  ))}
                </DataRow>
              </tbody>
            </Grid>
          </GridClip>
          <ScrollBar vertical size={40} />
        </GridBody>
        <GridFoot>
          <ScrollBar size={75} />
        </GridFoot>
      </GridFrame>
      <TabBar role='tablist'>
        <Pager>
          <button aria-label='Erste'><Triangle dir='left' bar /></button>
          <button aria-label='Vorherige'><Triangle dir='left' /></button>
          <span>4 von 7</span>
          <button aria-label='Nächste'><Triangle dir='right' /></button>
          <button aria-label='Letzte'><Triangle dir='right' bar /></button>
        </Pager>
        {tabNames.map(name => (
          <SheetTab key={name} role='tab' $active={tab === name} aria-selected={tab === name} onClick={() => setTab(name)}>
            {name}
          </SheetTab>
        ))}
      </TabBar>
    </TablePane>
  )
}

/* ---------- status bar ---------- */

const StatusBar = styled.footer`
  display: flex;
  align-items: center;
  height: 28px;
  gap: 2px;
`

const StatusToggle = styled.button`
  height: 22px;
  padding: 0 5px 0 4px;
  background: #f0f0f0;
  border-top: 1px solid #bbb;
  border-left: 1px solid #bbb;
`

const StatusCell = styled.span`
  flex: ${p => (p.$grow ? '1 1 0' : `0 0 ${p.$width}px`)};
  height: 24px;
  padding: 5px 2px;
  border-right: 1px solid ${p => (p.$plain ? 'transparent' : '#d8d8d8')};
`

/* ---------- top toolbar ---------- */

const Caret = ({ width = 14, color }) => (
  <ToolButton $width={width} aria-label='Mehr'>
    <CaretShape color={color} />
  </ToolButton>
)

const More = ({ width = 10 }) => (
  <ToolButton $width={width} aria-label='Weitere'>
    <MoreShape />
  </ToolButton>
)

const EmptySelect = ({ label }) => (
  <>
    <SelectBox>
      <select aria-label={label} disabled />
      <Chevron dir='down' size={10} weight={1.3} color='#aaa' />
    </SelectBox>
    <ArrowButton aria-label='Zurück'>
      <Triangle dir='left' />
    </ArrowButton>
    <ArrowButton aria-label='Weiter'>
      <Triangle dir='right' />
    </ArrowButton>
  </>
)

const createTools = [
  ['Punkt', <NewPointIcon />],
  ['Linie', <NewLineIcon />],
  ['Teil', <NewPartIcon />],
  ['Öffnung', <NewOpeningIcon />],
  ['Element', <NewElementIcon />],
]

const TopTools = () => (
  <ToolStrip>
    <Grip $width={11} />
    <ToolButton aria-label='Neu'><NewIcon /></ToolButton>
    <ToolButton aria-label='Öffnen'><OpenIcon /></ToolButton>
    <ToolButton aria-label='Dlubal Center'><CenterIcon /></ToolButton>
    <ToolButton aria-label='Basisangaben'><HandIcon /></ToolButton>
    <ToolButton aria-label='Speichern'><SaveIcon /></ToolButton>
    <ToolButton aria-label='Drucken'><PrintIcon /></ToolButton>
    <Caret />
    <ToolButton aria-label='Ausdruckprotokoll'><ReportIcon /></ToolButton>
    <Sep $space={3} />
    <ToolButton aria-label='Rückgängig'><UndoIcon /></ToolButton>
    <Caret />
    <ToolButton aria-label='Wiederherstellen'><UndoIcon flip color='#aaa' /></ToolButton>
    <Caret color='#777' />
    <Sep $space={3} />
    <ToolButton $active aria-label='Navigator'><NavIcon /></ToolButton>
    <ToolButton $active aria-label='Tabellen'><TablesIcon /></ToolButton>
    <ToolButton aria-label='Panel'><PanelIcon /></ToolButton>
    <ToolButton aria-label='Konsole'><ConsoleIcon /></ToolButton>
    <ToolButton aria-label='Skript'><ScriptIcon /></ToolButton>
    <Sep $tall />
    <Grip $width={8} />
    {createTools.map(([label, icon]) => (
      <React.Fragment key={label}>
        <ToolButton $width={32} aria-label={label}>{icon}</ToolButton>
        <Caret width={18} />
        <Sep />
      </React.Fragment>
    ))}
    <Grip />
    <EmptySelect label='Lastfall' />
    <Sep $space={3} />
    <EmptySelect label='Ergebnis' />
    <More width={15} />
    <Sep $tall />
    <Grip />
    <ToolButton $width={38} aria-label='Zoom aufheben'><ZoomOffIcon /></ToolButton>
    <More />
    <Sep $tall $space={1} />
    <Grip />
    <ToolButton $width={38} aria-label='Hilfslinien'><GuideIcon /></ToolButton>
    <More />
    <Sep $tall $space={1} />
    <Grip />
    <ToolButton $width={32} aria-label='Tabelle bearbeiten'><SheetIcon size={24} /></ToolButton>
    <Caret />
    <More width={17} />
  </ToolStrip>
)

const App = () => (
  <>
    <GlobalStyle />
    <Window>
      <TitleBar>
        <LogoIcon />
        <h1>Dlubal RSECTION | 1.02.0001 | RSECTION_1.rsc</h1>
        <WindowButton aria-label='Minimieren'>
          <svg width='12' height='12'><path d='M0 5.500h12' stroke='#000' /></svg>
        </WindowButton>
        <WindowButton aria-label='Maximieren'>
          <svg width='12' height='12'><path d='M.5.5h11v11H.5z' fill='none' stroke='#000' /></svg>
        </WindowButton>
        <WindowButton aria-label='Schließen'>
          <svg width='12' height='12'><path d='m0 0 12 12M12 0 0 12' stroke='#000' /></svg>
        </WindowButton>
      </TitleBar>
      <TopMenu>
        <BridgeIcon />
        {['Datei', 'Bearbeiten', 'Ansicht', 'Einfügen', 'Berechnen', 'Extras', 'Optionen', 'Fenster', 'Hilfe'].map(m => (
          <MenuItem key={m}>{m}</MenuItem>
        ))}
        <MenuMarks>
          <MenuMark />
          <MenuMark />
          <MenuMark />
        </MenuMarks>
      </TopMenu>
      <TopTools />
      <Main>
        <Navigator />
        <Work>
          <Drawing />
          <PartsTable />
        </Work>
      </Main>
      <StatusBar>
        <StatusCell $width={580} $plain />
        <StatusToggle>FANG</StatusToggle>
        <StatusToggle>RASTER</StatusToggle>
        <StatusToggle>OFANG</StatusToggle>
        <StatusCell $width={5} />
        <StatusCell $width={127} />
        <StatusCell $width={129} />
        <StatusCell $grow>KS: Global YZ</StatusCell>
        <StatusCell $width={92} />
        <StatusCell $width={92} />
        <svg width='18' height='24' aria-hidden='true'>
          <path d='M12 10h3v3h-3zM12 14h3v3h-3zM12 18h3v3h-3zM8 14h3v3H8zM8 18h3v3H8zM4 18h3v3H4z' fill='#bbb' />
        </svg>
      </StatusBar>
    </Window>
  </>
)

export default App
